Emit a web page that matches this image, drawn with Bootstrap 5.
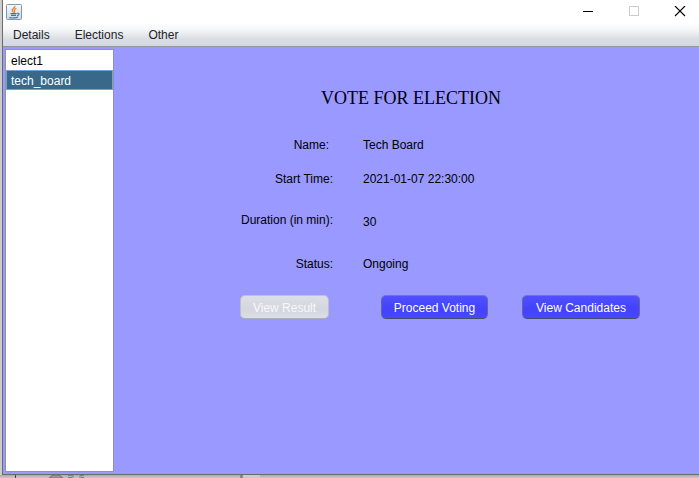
<!DOCTYPE html>
<html lang="en">
<head>
<meta charset="utf-8">
<meta name="viewport" content="width=device-width, initial-scale=1">
<title>Vote for election</title>
<link rel="stylesheet" href="https://cdn.jsdelivr.net/npm/bootstrap@5.3.0/dist/css/bootstrap.min.css">
<style>
body { font-family: "Liberation Sans", Arial, sans-serif; font-size: 12px; line-height: 18px; color: #000; background: #ccc; }
.app-window { border-left: 1px solid #6b6b6b; border-bottom: 1px solid #6b6b6b; margin-left: 2px; min-height: 0; }
.title-bar { height: 24px; padding-left: 3px; }
.win-btn { width: 38px; height: 24px; padding: 0; border: 0; background: none; line-height: 0; }
.menu-strip { height: 23px; padding-left: 10px; gap: 25px; border-bottom: 1px solid #94959e; background: linear-gradient(#fdfdfd 0%, #f6f7f8 25%, #d9dce1 70%, #d5d8df 100%); }
.menu-strip button { padding: 0; border: 0; background: none; color: #23232b; line-height: 22px; }
.workspace { background: #9999ff; padding: 2px; min-height: 0; }
.side-list { width: 109px; border: 1px solid #92959d; border-radius: 0; background: #fff; }
.side-list .list-group-item { height: 20px; padding: 0 4px; border: 1px solid #fff; border-radius: 0; color: #000; line-height: 20px; }
.side-list .list-group-item.active { margin-top: 0; background: #39698a; border-color: #73a4d1; color: #fff; }
.vote-pane { padding-top: 39px; }
.vote-title { font-family: "Liberation Serif", "Times New Roman", serif; font-size: 18px; line-height: 20px; padding-left: 207px; margin-bottom: 20px; font-weight: 400; }
.facts { display: grid; grid-template-columns: 219px 1fr; grid-template-rows: 34px 34px 48px 40px; column-gap: 30px; align-items: center; }
.facts dt { font-weight: 400; text-align: right; }
.facts .name-label { padding-right: 4px; }
.facts .minutes { padding-top: 3px; }
.actions { padding: 11px 0 0 126px; }
.actions .btn { --bs-btn-font-size: 12px; --bs-btn-padding-y: 0; --bs-btn-padding-x: 0; --bs-btn-border-radius: 5px; height: 24px; line-height: 24px; color: #fff; background: linear-gradient(#5050ff, #4242ff 60%, #4848ff); border-color: #7777a8 #66669c #4c4c66; }
.actions .btn:disabled { opacity: 1; color: #f7f8fb; background: linear-gradient(#dcdfe4, #d3d6dd 60%, #dcdfe4); border-color: #c0c2cb #bbbdc9 #adafba; }
.btn-result { width: 89px; }
.btn-vote { width: 107px; margin-left: 52px; }
.btn-people { width: 118px; margin-left: 34px; }
.under-strip { height: 3px; background: linear-gradient(#aaa, #c8c8c8); }
</style>
<script src="https://cdn.jsdelivr.net/npm/bootstrap@5.3.0/dist/js/bootstrap.bundle.min.js"></script>
</head>
<body>
<div class="d-flex flex-column vh-100">
  <div class="app-window d-flex flex-column flex-grow-1">
    <header class="title-bar d-flex align-items-start bg-white">
      <svg class="mt-1" width="16" height="16" viewBox="0 0 16 16" aria-hidden="true">
        <defs><linearGradient id="tile" x2="0" y2="1"><stop offset="0" stop-color="#f7f9fb"/><stop offset="1" stop-color="#cfdbe5"/></linearGradient></defs>
        <rect x=".5" y=".5" width="15" height="15" rx="1" fill="url(#tile)" stroke="#7f98ae"/>
        <path d="M8.800 2C9.600 3.800 5.200 4.600 6.200 6.600 6.600 7.500 7.500 7.800 7.200 8.800M10.400 4.400C8.200 5.200 7.700 6 8.500 7 9 7.700 8.800 8.200 8.200 8.700" fill="none" stroke="#ef8422" stroke-width="1.3"/>
        <path d="M4.400 9.600H10.600M5 11.400H10M3.200 13.400C5.500 14.200 10 14.100 12 13M11 9.400C13.700 8.500 13.800 11 11 11.700" fill="none" stroke="#47789f" stroke-width="1.1"/>
      </svg>
      <div class="d-flex gap-2 ms-auto">
        <button class="win-btn" type="button" aria-label="Minimize"><svg width="12" height="12" viewBox="0 0 12 12"><path d="M1 5.500h10" stroke="#000"/></svg></button>
        <button class="win-btn" type="button" aria-label="Maximize" disabled><svg width="12" height="12" viewBox="0 0 12 12"><path d="M1.500 .5h9v9h-9z" fill="none" stroke="#ccc"/></svg></button>
        <button class="win-btn" type="button" aria-label="Close"><svg width="12" height="12" viewBox="0 0 12 12"><path d="M1 0l10 10M11 0L1 10" stroke="#000" stroke-width="1.1"/></svg></button>
      </div>
    </header>
    <nav class="menu-strip d-flex align-items-center" aria-label="Main menu">
      <button type="button">Details</button>
      <button type="button">Elections</button>
      <button type="button">Other</button>
    </nav>
    <div class="workspace d-flex flex-grow-1">
      <div class="side-list list-group flex-shrink-0">
        <button type="button" class="list-group-item text-start">elect1</button>
        <button type="button" class="list-group-item text-start active" aria-current="true">tech_board</button>
      </div>
      <main class="vote-pane flex-grow-1">
        <h1 class="vote-title">VOTE FOR ELECTION</h1>
        <dl class="facts mb-0">
          <dt class="name-label">Name:</dt><dd class="mb-0">Tech Board</dd>
          <dt>Start Time:</dt><dd class="mb-0">2021-01-07 22:30:00</dd>
          <dt>Duration (in min):</dt><dd class="minutes mb-0">30</dd>
          <dt>Status:</dt><dd class="mb-0">Ongoing</dd>
        </dl>
        <div class="actions d-flex">
          <button type="button" class="btn btn-result" disabled>View Result</button>
          <button type="button" class="btn btn-vote">Proceed Voting</button>
          <button type="button" class="btn btn-people">View Candidates</button>
        </div>
      </main>
    </div>
  </div>
  <div class="under-strip d-flex">
    <svg width="260" height="3" viewBox="0 0 260 3" aria-hidden="true">
      <path d="M15.500 0v3" stroke="#444"/>
      <path d="M49 3q2-3 7-3t7 3z" fill="#999" stroke="#777"/>
      <path d="M68 .5h5v2.500M84 .5h-4v2.500" fill="none" stroke="#68809a"/>
      <path d="M68 2.500h4M81 2.500h3" stroke="#579457"/>
      <path d="M240 0h3v3h-3z" fill="#888"/>
      <path d="M243 0h17v3h-17z" fill="#ccc"/>
    </svg>
  </div>
</div>
</body>
</html>
